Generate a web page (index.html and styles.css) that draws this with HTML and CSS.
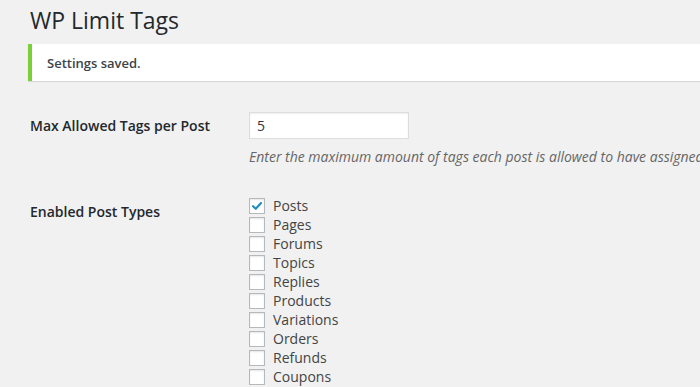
FILE: index.html
```html
<!DOCTYPE html>
<html>
<head>
<meta charset="utf-8">
<link rel="stylesheet" href="styles.css">
</head>
<body>
<div class="wrap">
  <h1 class="title">WP Limit Tags</h1>
  <div class="notice"><p>Settings saved.</p></div>
  <div class="form-table">
    <div class="row row-tags">
      <div class="label">Max Allowed Tags per Post</div>
      <div class="field">
        <input class="text-input" type="text" value="5">
        <p class="description">Enter the maximum amount of tags each post is allowed to have assigned.</p>
      </div>
    </div>
    <div class="row row-types">
      <div class="label">Enabled Post Types</div>
      <div class="field checks">
        <label class="check"><span class="box checked"><svg viewBox="0 0 16 16" width="16" height="16"><path d="M3.5 8.2 L6.6 11.2 L12.6 4.6" fill="none" stroke="#1e8cbe" stroke-width="2.4" stroke-linecap="round" stroke-linejoin="round"/></svg></span>Posts</label>
        <label class="check"><span class="box"></span>Pages</label>
        <label class="check"><span class="box"></span>Forums</label>
        <label class="check"><span class="box"></span>Topics</label>
        <label class="check"><span class="box"></span>Replies</label>
        <label class="check"><span class="box"></span>Products</label>
        <label class="check"><span class="box"></span>Variations</label>
        <label class="check"><span class="box"></span>Orders</label>
        <label class="check"><span class="box"></span>Refunds</label>
        <label class="check"><span class="box"></span>Coupons</label>
      </div>
    </div>
  </div>
</div>
</body>
</html>
```

FILE: styles.css
```css
html, body {
  margin: 0;
  padding: 0;
  background: #f1f1f1;
  font-family: "Open Sans", "Noto Sans", sans-serif;
  color: #23282d;
  overflow: hidden;
  height: 387px;
}
.wrap {
  padding: 0 0 0 28px;
}
.title {
  margin: 0;
  padding: 6px 0 0 2px;
  font-size: 23px;
  font-weight: 400;
  line-height: 29px;
  color: #23282d;
}
.notice {
  margin-top: 9px;
  background: #fff;
  border-left: 4px solid #7ad03a;
  box-shadow: 0 1px 1px rgba(0,0,0,0.1);
  height: 37px;
  display: flex;
  align-items: center;
}
.notice p {
  margin: 0 0 0 15px;
  font-size: 13px;
  font-weight: 600;
  color: #3c434a;
}
.form-table {
  margin-top: 31px;
  padding-left: 2px;
}
.row {
  display: grid;
  grid-template-columns: 219px 1fr;
}
.row-types {
  margin-top: 29px;
}
.label {
  font-size: 14px;
  font-weight: 600;
  color: #23282d;
  line-height: 20px;
  padding-top: 4px;
}
.row-types .label {
  padding-top: 6px;
}
.field {
  min-width: 0;
}
.text-input {
  display: block;
  box-sizing: border-box;
  width: 160px;
  height: 27px;
  margin: 0;
  border: 1px solid #ddd;
  box-shadow: inset 0 1px 2px rgba(0,0,0,0.07);
  background: #fff;
  font-family: "Open Sans", sans-serif;
  font-size: 14px;
  color: #32373c;
  padding: 0 7px;
  outline: none;
}
.description {
  margin: 8px 0 0;
  font-size: 14px;
  font-style: italic;
  color: #666;
  white-space: nowrap;
  line-height: 20px;
}
.checks {
  display: flex;
  flex-direction: column;
}
.check {
  display: flex;
  align-items: center;
  height: 19px;
  font-size: 14px;
  color: #444;
}
.box {
  box-sizing: border-box;
  width: 16px;
  height: 16px;
  border: 1px solid #b4b9be;
  background: #fff;
  box-shadow: inset 0 1px 2px rgba(0,0,0,0.1);
  margin-right: 8px;
  display: flex;
  align-items: center;
  justify-content: center;
  flex: none;
}
.box svg {
  display: block;
}
```
